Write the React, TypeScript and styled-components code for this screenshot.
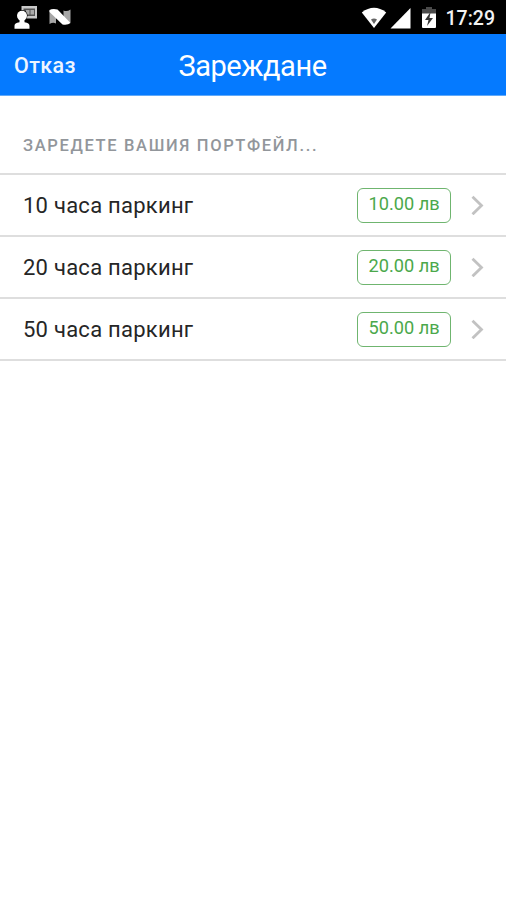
import React from "react";
import styled, { createGlobalStyle } from "styled-components";

const GlobalStyle = createGlobalStyle`
  *, *::before, *::after { box-sizing: border-box; }
  body { margin: 0; background: #fff; font-family: Roboto, "Liberation Sans", sans-serif; }
`;

const Screen = styled.div`
  display: flex;
  flex-direction: column;
  min-height: 900px;
  background: #fff;
`;

const StatusBar = styled.div`
  display: flex;
  align-items: flex-start;
  justify-content: space-between;
  height: 34px;
  padding: 0 11px 0 14px;
  background: #000;
`;

const StatusLeft = styled.div`
  display: flex;
  gap: 11px;
  padding-top: 5px;
`;

const StatusRight = styled.div`
  display: flex;
  align-items: flex-start;
  padding-top: 6px;
`;

const Clock = styled.span`
  margin: 1px 0 0 9px;
  color: #f2f2f2;
  font-size: 19.5px;
  line-height: 24px;
  font-weight: 500;
`;

const NavBar = styled.header`
  display: grid;
  grid-template-columns: 1fr auto 1fr;
  align-items: center;
  height: 62px;
  padding: 2px 15px 0 14px;
  background: #057aff;
  border-bottom: 1px solid #60a9f9;
  color: #fff;
`;

const CancelButton = styled.button`
  justify-self: start;
  padding: 0;
  border: 0;
  background: none;
  color: #eef5ff;
  font-family: inherit;
  font-size: 21.5px;
  line-height: 28px;
  font-weight: 500;
  letter-spacing: 0.4px;
`;

const Title = styled.h1`
  margin: 0;
  font-size: 29px;
  line-height: 34px;
  font-weight: 400;
  letter-spacing: -0.45px;
`;

const SectionHeader = styled.h2`
  margin: 0;
  height: 79px;
  padding: 39px 23px 0;
  border-bottom: 2px solid #dedede;
  color: #92969b;
  font-size: 16.5px;
  line-height: 22px;
  font-weight: 500;
  letter-spacing: 1.65px;
`;

const List = styled.ul`
  margin: 0;
  padding: 0;
  list-style: none;
`;

const Row = styled.li`
  display: flex;
  align-items: center;
  height: 62px;
  padding: 0 22px 0 23px;
  border-bottom: 2px solid #dedede;
`;

const RowLabel = styled.span`
  flex: 1;
  padding-top: 2px;
  color: #262626;
  font-size: 22px;
  line-height: 28px;
  letter-spacing: 0.25px;
`;

const Price = styled.span`
  width: 94px;
  height: 35px;
  margin-right: 20px;
  border: 1.5px solid #6fb56f;
  border-radius: 6px;
  color: #4ba84b;
  font-size: 18.2px;
  line-height: 30px;
  text-align: center;
`;

const ITEMS = [
  { label: "10 часа паркинг", price: "10.00 лв" },
  { label: "20 часа паркинг", price: "20.00 лв" },
  { label: "50 часа паркинг", price: "50.00 лв" },
];

const ContactIcon = () => (
  <svg width="24" height="25" viewBox="0 0 24 25">
    <path d="M7.500 1H23V13.500H7.500z" fill="#c9c9c9" />
    <path d="M9.500 3.500h11.500v7.500H9.500z" fill="#555" />
    <path d="M12 5h3.500v4.500H12zM16.500 5h3.500v4.500h-3.500z" fill="#aaa" />
    <circle cx="8" cy="10.500" r="5.500" fill="#000" />
    <circle cx="8" cy="10.800" r="5" fill="#fff" />
    <path d="M5.500 14h5v3.300c3.500.5 5 1.600 5 3.500v3H.5v-3c0-1.900 1.500-3 5-3.500z" fill="#fff" />
  </svg>
);

const NougatIcon = () => (
  <svg width="22" height="25" viewBox="0 0 22 25">
    <path d="M.5 5.500Q3 4 7 6v12.500Q4 17 .5 19zM14.500 5.500Q18 7 21.500 4.500v13q-3 2-7 1z" fill="#a6a6a6" />
    <path d="M.5 5q3-1.500 8-.5l13 13.500q-3 2.500-8 1.500L.5 7z" fill="#fff" />
  </svg>
);

const WifiIcon = () => (
  <svg width="26" height="22" viewBox="0 0 26 22">
    <path d="M.8 5.500Q13-3.800 25.200 5.500L13 21z" fill="#fff" />
    <path d="M10 12.500q3-1.800 6 0L13 17z" fill="#666" />
  </svg>
);

const SignalIcon = () => (
  <svg width="22" height="22" viewBox="0 0 22 22">
    <path d="M.5 21.500L20.500 1v20.500z" fill="#fff" />
  </svg>
);

const BatteryIcon = () => (
  <svg width="16" height="22" viewBox="0 0 16 22">
    <path d="M5 0h6v2h4v5H1V2h4z" fill="#4a4a4a" />
    <path d="M1 6.500h14V20q0 1-1 1H2q-1 0-1-1z" fill="#fff" />
    <path d="M9.500 5L4 13h3.500L6 19l6-8H8.500z" fill="#333" />
  </svg>
);

const Icons = styled.div`
  display: flex;
  gap: 3px;
  padding-right: 0;
  margin-top: 1px;

  svg:last-child { margin-left: 6px; }
`;

const Chevron = () => (
  <svg width="13" height="20" viewBox="0 0 13 20" fill="none" stroke="#c2c2c2" strokeWidth="2.800">
    <path d="M1.500 1.700L10.500 10.500L1.500 19.300" />
  </svg>
);

export default function App() {
  return (
    <Screen>
      <GlobalStyle />
      <StatusBar>
        <StatusLeft>
          <ContactIcon />
          <NougatIcon />
        </StatusLeft>
        <StatusRight>
          <Icons>
            <WifiIcon />
            <SignalIcon />
            <BatteryIcon />
          </Icons>
          <Clock>17:29</Clock>
        </StatusRight>
      </StatusBar>
      <NavBar>
        <CancelButton>Отказ</CancelButton>
        <Title>Зареждане</Title>
      </NavBar>
      <SectionHeader>ЗАРЕДЕТЕ ВАШИЯ ПОРТФЕЙЛ...</SectionHeader>
      <List>
        {ITEMS.map((item) => (
          <Row key={item.label}>
            <RowLabel>{item.label}</RowLabel>
            <Price>{item.price}</Price>
            <Chevron />
          </Row>
        ))}
      </List>
    </Screen>
  );
}
